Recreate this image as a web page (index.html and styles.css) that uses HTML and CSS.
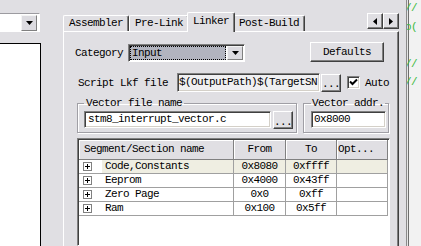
FILE: index.html
```html
<!DOCTYPE html>
<html>
<head>
    <link rel="stylesheet" href="styles.css">
</head>
<body>
    <div class="window">
        <div class="side">
            <div class="side-combo">
                <span class="drop-btn"><svg width="7" height="4"><path d="M0 0h7L3.5 4z"/></svg></span>
            </div>
            <div class="side-list"></div>
        </div>

        <div class="props">
            <div class="tabbar">
                <div class="tab">Assembler</div>
                <div class="tab">Pre-Link</div>
                <div class="tab active">Linker</div>
                <div class="tab">Post-Build</div>
                <div class="tab-scroll">
                    <span class="btn sbtn"><svg width="4" height="7"><path d="M4 0v7L0 3.5z"/></svg></span>
                    <span class="btn sbtn"><svg width="4" height="7"><path d="M0 0v7l4-3.5z"/></svg></span>
                </div>
            </div>

            <div class="page">
                <div class="cat-row">
                    <span>Category</span>
                    <div class="combo">
                        <span class="combo-sel">Input</span>
                        <span class="drop-btn"><svg width="7" height="4"><path d="M0 0h7L3.5 4z"/></svg></span>
                    </div>
                    <span class="btn defaults">Defaults</span>
                </div>

                <div class="script-row">
                    <span>Script Lkf file</span>
                    <span class="edit script-edit">$(OutputPath)$(TargetSN</span>
                    <span class="btn dots">...</span>
                    <span class="check"><svg width="9" height="9"><path d="M1 3.5l2.5 2.5L8 1.5" fill="none" stroke="#000" stroke-width="2"/></svg></span>
                    <span class="auto">Auto</span>
                </div>

                <div class="groups">
                    <fieldset class="group group-file">
                        <legend>Vector file name</legend>
                        <div class="group-body">
                            <span class="edit file-edit">stm8_interrupt_vector.c</span>
                            <span class="btn dots">...</span>
                        </div>
                    </fieldset>
                    <fieldset class="group group-addr">
                        <legend>Vector addr.</legend>
                        <div class="group-body">
                            <span class="edit addr-edit">0x8000</span>
                        </div>
                    </fieldset>
                </div>

                <div class="list">
                    <table class="segments">
                        <colgroup>
                            <col class="c-name"><col class="c-from"><col class="c-to"><col class="c-opt">
                        </colgroup>
                        <thead>
                            <tr>
                                <th class="th-name">Segment/Section name</th>
                                <th>From</th>
                                <th>To</th>
                                <th class="th-opt">Opt...</th>
                            </tr>
                        </thead>
                        <tbody>
                            <tr class="sel">
                                <td class="name"><div class="name-wrap"><svg class="plus" width="9" height="9"><rect x="0.5" y="0.5" width="8" height="8" fill="#fff" stroke="#808080"/><path d="M2 4.5h5M4.5 2v5" stroke="#000"/></svg><span class="label">Code,Constants</span></div></td>
                                <td>0x8080</td>
                                <td>0xffff</td>
                                <td></td>
                            </tr>
                            <tr>
                                <td class="name"><div class="name-wrap"><svg class="plus" width="9" height="9"><rect x="0.5" y="0.5" width="8" height="8" fill="#fff" stroke="#808080"/><path d="M2 4.5h5M4.5 2v5" stroke="#000"/></svg><span class="label">Eeprom</span></div></td>
                                <td>0x4000</td>
                                <td>0x43ff</td>
                                <td></td>
                            </tr>
                            <tr>
                                <td class="name"><div class="name-wrap"><svg class="plus" width="9" height="9"><rect x="0.5" y="0.5" width="8" height="8" fill="#fff" stroke="#808080"/><path d="M2 4.5h5M4.5 2v5" stroke="#000"/></svg><span class="label">Zero Page</span></div></td>
                                <td>0x0</td>
                                <td>0xff</td>
                                <td></td>
                            </tr>
                            <tr>
                                <td class="name"><div class="name-wrap"><svg class="plus" width="9" height="9"><rect x="0.5" y="0.5" width="8" height="8" fill="#fff" stroke="#808080"/><path d="M2 4.5h5M4.5 2v5" stroke="#000"/></svg><span class="label">Ram</span></div></td>
                                <td>0x100</td>
                                <td>0x5ff</td>
                                <td></td>
                            </tr>
                        </tbody>
                    </table>
                </div>
            </div>
        </div>

        <div class="gutter"></div>
        <div class="editor">
            <div class="code-line">//</div>
            <div class="code-line">o(</div>
            <div class="code-line"></div>
            <div class="code-line">//</div>
            <div class="code-line">//</div>
        </div>
    </div>
</body>
</html>
```

FILE: styles.css
```css
* {
    box-sizing: border-box;
}
body {
    margin: 0;
    width: 421px;
    height: 246px;
    overflow: hidden;
    background: #e0dfe3;
    color: #000;
    font-family: "Liberation Mono", "DejaVu Sans Mono", monospace;
    font-size: 11px;
    letter-spacing: -0.6px;
}
.window {
    display: flex;
    height: 246px;
}

/* left pane (cut off) */
.side {
    width: 63px;
    flex: none;
}
.side-combo {
    margin-top: 13px;
    width: 40px;
    height: 19px;
    background: #fff;
    border-top: 1px solid #9c9ba0;
    border-right: 1px solid #fff;
    border-bottom: 1px solid #fff;
    display: flex;
    justify-content: flex-end;
    align-items: center;
    padding-right: 2px;
}
.side-combo .drop-btn {
    width: 16px;
    height: 16px;
}
.side-list {
    margin-top: 11px;
    width: 41px;
    height: 203px;
    background: #fff;
    border-top: 1px solid #000;
    border-right: 1px solid #000;
}

/* classic 3d controls */
.btn {
    display: flex;
    align-items: center;
    justify-content: center;
    background: #e0dfe3;
    border: 1px solid;
    border-color: #fff #404040 #404040 #fff;
    box-shadow: inset -1px -1px 0 #808080;
}
.drop-btn {
    display: flex;
    align-items: center;
    justify-content: center;
    background: #dcdbe0;
    border: 1px solid;
    border-color: #f4f4f4 #808080 #808080 #f4f4f4;
}
.edit {
    display: block;
    background: #fff;
    border: 1px solid;
    border-color: #808080 #fff #fff #808080;
    box-shadow: inset 1px 1px 0 #404040, inset -1px -1px 0 #d4d0c8;
    padding-left: 2px;
    white-space: nowrap;
    overflow: hidden;
}

/* property sheet */
.props {
    width: 336px;
    flex: none;
    display: flex;
    flex-direction: column;
}
.tabbar {
    height: 31px;
    flex: none;
    display: flex;
    align-items: flex-end;
}
.tab {
    height: 16px;
    padding: 0 5px;
    line-height: 15px;
    border: 1px solid;
    border-color: #fff #404040 transparent #fff;
    border-bottom: none;
    border-radius: 2px 2px 0 0;
    box-shadow: inset -1px 0 0 #808080;
    white-space: nowrap;
}
.tab.active {
    position: relative;
    z-index: 1;
    height: 20px;
    margin: 0 -2px -1px;
    line-height: 17px;
    background: #e0dfe3;
}
.tab-scroll {
    margin-left: auto;
    align-self: flex-start;
    margin-top: 13px;
    display: flex;
}
.sbtn {
    width: 16px;
    height: 16px;
}
.page {
    flex: 1;
    display: flex;
    flex-direction: column;
    border-top: 1px solid #fff;
    border-left: 1px solid #fff;
    border-right: 1px solid #404040;
    box-shadow: inset -1px 0 0 #808080;
    padding: 10px 8px 0 13px;
}

.cat-row {
    display: flex;
    align-items: center;
    height: 22px;
    margin-left: -2px;
}
.combo {
    margin-left: 5px;
    width: 117px;
    height: 18px;
    display: flex;
    padding: 1px;
    background: #fff;
    border: 1px solid;
    border-color: #808080 #fff #fff #808080;
    box-shadow: inset 1px 1px 0 #404040;
}
.combo-sel {
    flex: 1;
    margin-right: 1px;
    background: #b2b4bf;
    outline: 1px dotted #000;
    outline-offset: -1px;
    padding-left: 2px;
    line-height: 14px;
}
.combo .drop-btn {
    width: 16px;
}
.defaults {
    margin-left: auto;
    margin-right: 6px;
    align-self: flex-start;
    width: 74px;
    height: 20px;
}

.script-row {
    margin-top: 9px;
    margin-left: 1px;
    display: flex;
    align-items: center;
    height: 19px;
}
.script-edit {
    margin-left: 9px;
    width: 143px;
    height: 19px;
    line-height: 17px;
    padding-left: 1px;
    background: #efeff1;
}
.dots {
    width: 20px;
    height: 18px;
    padding-top: 3px;
}
.script-row .dots {
    margin-left: 1px;
}
.check {
    margin-left: 6px;
    width: 13px;
    height: 13px;
    display: flex;
    align-items: center;
    justify-content: center;
    background: #fff;
    border: 1px solid;
    border-color: #808080 #fff #fff #808080;
    box-shadow: inset 1px 1px 0 #404040, inset -1px -1px 0 #d4d0c8;
}
.auto {
    margin-left: 5px;
}

.groups {
    margin-top: 5px;
    display: flex;
    gap: 6px;
}
.group {
    margin: 0;
    border: 1px solid #a09fa5;
    box-shadow: inset 1px 1px 0 #fff, 1px 1px 0 #fff;
    padding: 2px 3px 3px 6px;
    min-width: 0;
}
.group legend {
    padding: 0 2px;
    line-height: 12px;
    white-space: nowrap;
}
.group-body {
    display: flex;
}
.group-file {
    width: 220px;
}
.group-addr {
    width: 86px;
    padding: 2px 2px 3px 7px;
}
.group-addr legend {
    padding: 0 1px;
}
.file-edit {
    width: 187px;
    height: 17px;
    line-height: 15px;
    padding-left: 3px;
}
.group-file .dots {
    margin-left: 2px;
}
.addr-edit {
    width: 75px;
    height: 17px;
    line-height: 15px;
}

/* segment list */
.list {
    margin-top: 5px;
    flex: 1;
    padding: 1px;
    background: #fff;
    border: 1px solid;
    border-color: #808080 #fff #fff #808080;
    box-shadow: inset 1px 1px 0 #404040;
}
.segments {
    border-collapse: separate;
    border-spacing: 0;
    table-layout: fixed;
    width: 309px;
}
.c-name {
    width: 155px;
}
.c-from {
    width: 52px;
}
.c-to,
.c-opt {
    width: 51px;
}
.segments th {
    padding: 0;
    font-weight: normal;
    line-height: 19px;
    background: #e0dfe3;
    border-right: 1px solid #808080;
    border-bottom: 1px solid #808080;
    box-shadow: inset 1px 1px 0 #fff;
    white-space: nowrap;
    overflow: hidden;
}
.segments .th-name {
    text-align: left;
    padding-left: 5px;
}
.segments .th-opt {
    text-align: left;
    padding-left: 1px;
}
.segments td {
    padding: 0;
    height: 14px;
    line-height: 13px;
    text-align: center;
    border-right: 1px solid #a0a0a0;
    border-bottom: 1px solid #a0a0a0;
    white-space: nowrap;
}
.segments td.name {
    text-align: left;
}
.name-wrap {
    display: flex;
    align-items: center;
    height: 13px;
}
.plus {
    margin-left: 4px;
    flex: none;
}
.label {
    margin-left: 10px;
    padding-left: 3px;
    flex: 1;
    height: 13px;
}
.sel td:not(.name),
.sel .label {
    background: #efeee2;
}

/* editor behind the dialog */
.gutter {
    width: 7px;
    flex: none;
}
.editor {
    flex: 1;
    overflow: hidden;
    background: #f2f2f2;
    border-left: 1px solid #8a8a8a;
    box-shadow: inset 1px 0 0 #e6e6e6, inset 2px 0 0 #6e6e6e;
    margin-top: -1px;
}
.code-line {
    height: 18.5px;
    line-height: 18px;
    text-indent: -2px;
    color: #3cba3c;
    white-space: nowrap;
}
```
